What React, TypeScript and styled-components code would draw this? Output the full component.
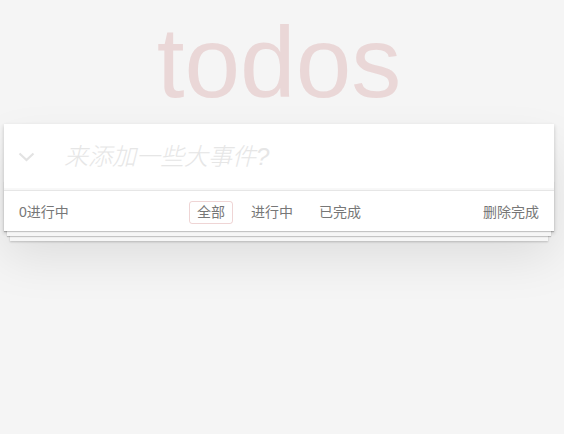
import * as React from 'react'
import styled, { createGlobalStyle } from 'styled-components'

const GlobalStyle = createGlobalStyle`
    html, body {
        margin: 0;
        padding: 0;
        min-height: 100%;
        height: 100%;
    }

    body {
        background: #f5f5f5;
        color: #4d4d4d;
        font: 14px/1.4em "Liberation Sans", "Noto Sans CJK SC", sans-serif;
        -webkit-font-smoothing: antialiased;
    }
`

const filters = ['全部', '进行中', '已完成']

export default () => {
    const [text, setText] = React.useState('')
    const [filter, setFilter] = React.useState(0)

    return (
        <Page>
            <GlobalStyle />
            <Title>todos</Title>
            <Card>
                <Header>
                    <ToggleAll aria-label="全部完成">
                        <svg width="17" height="10" viewBox="0 0 17 10">
                            <polyline
                                points="1.5,1.5 8.5,8 15.5,1.5"
                                fill="none"
                                stroke="#e3e3e3"
                                strokeWidth="2.2"
                            />
                        </svg>
                    </ToggleAll>
                    <NewTodo
                        placeholder="来添加一些大事件?"
                        value={text}
                        onChange={e => setText(e.target.value)}
                    />
                </Header>
                <Footer>
                    <Count>0进行中</Count>
                    <Filters>
                        {filters.map((name, index) =>
                            <FilterItem key={name}>
                                <FilterLink
                                    $selected={index === filter}
                                    onClick={() => setFilter(index)}
                                >
                                    {name}
                                </FilterLink>
                            </FilterItem>
                        )}
                    </Filters>
                    <ClearCompleted>删除完成</ClearCompleted>
                </Footer>
            </Card>
        </Page>
    )
}

const Page = styled.section`
    width: 550px;
    margin: 0 0 0 4px;
    padding-bottom: 120px;
`

const Title = styled.h1`
    margin: 12px 0;
    font-size: 100px;
    line-height: 100px;
    font-weight: 100;
    text-align: center;
    color: rgba(175, 47, 47, 0.15);
    text-rendering: optimizeLegibility;
`

const Card = styled.div`
    position: relative;
    z-index: 0;
    background: #fff;
    box-shadow: 0 2px 4px 0 rgba(0, 0, 0, 0.2),
                0 25px 50px 0 rgba(0, 0, 0, 0.1);
`

const Header = styled.header`
    display: flex;
    align-items: center;
    background: #fff;
    box-shadow: inset 0 -2px 1px rgba(0, 0, 0, 0.03);
`

const ToggleAll = styled.button`
    display: flex;
    align-items: center;
    justify-content: center;
    flex: 0 0 45px;
    height: 45px;
    padding: 0;
    border: none;
    background: none;
    cursor: pointer;
`

const NewTodo = styled.input`
    flex: 1;
    min-width: 0;
    box-sizing: border-box;
    padding: 16px 16px 16px 15px;
    border: none;
    outline: none;
    background: transparent;
    font-family: inherit;
    font-size: 24px;
    line-height: 1.4em;
    height: 65.6px;
    color: inherit;

    &::placeholder {
        font-style: italic;
        font-weight: 300;
        color: #e6e6e6;
    }
`

const Footer = styled.footer`
    position: relative;
    display: grid;
    grid-template-columns: 1fr auto 1fr;
    align-items: center;
    height: 20px;
    padding: 10px 15px;
    border-top: 1px solid #e6e6e6;
    background: #fff;
    color: #777;
    line-height: 20px;

    &:before {
        content: '';
        position: absolute;
        right: 0;
        bottom: 0;
        left: 0;
        height: 50px;
        overflow: hidden;
        z-index: -1;
        box-shadow: 0 1px 1px rgba(0, 0, 0, 0.2),
                    0 8px 0 -3px #f6f6f6,
                    0 9px 1px -3px rgba(0, 0, 0, 0.2),
                    0 16px 0 -6px #f6f6f6,
                    0 17px 2px -6px rgba(0, 0, 0, 0.2);
    }
`

const Count = styled.span`
    justify-self: start;
`

const Filters = styled.ul`
    display: flex;
    gap: 4px;
    margin: 0;
    padding: 0;
    list-style: none;
`

const FilterItem = styled.li`
    margin: 0 3px;
`

const FilterLink = styled.a<{ $selected: boolean }>`
    display: inline-block;
    padding: 3px 7px;
    line-height: 15px;
    border: 1px solid ${p => p.$selected ? 'rgba(175, 47, 47, 0.2)' : 'transparent'};
    border-radius: 3px;
    color: inherit;
    cursor: pointer;

    &:hover {
        border-color: rgba(175, 47, 47, 0.1);
    }
`

const ClearCompleted = styled.button`
    justify-self: end;
    padding: 0;
    border: none;
    background: none;
    font: inherit;
    line-height: 20px;
    color: inherit;
    cursor: pointer;

    &:hover {
        text-decoration: underline;
    }
`
